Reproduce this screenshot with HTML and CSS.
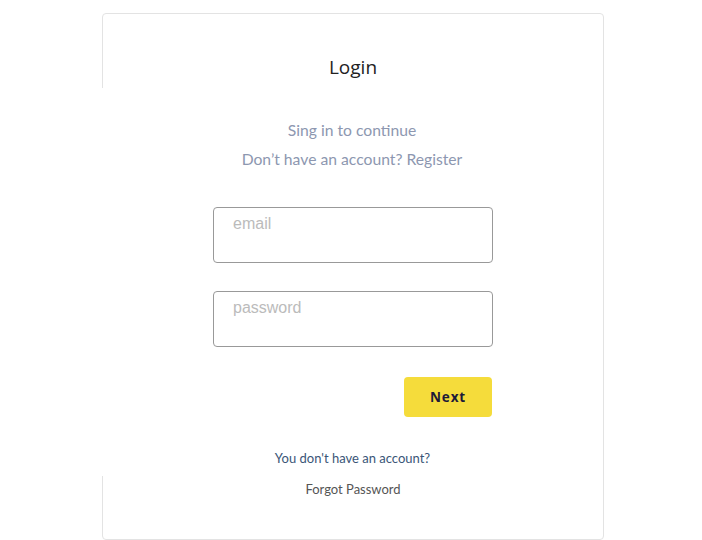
FILE: index.html
```html
<!DOCTYPE html>
<html>
<head>
<meta charset="utf-8">
<link rel="stylesheet" href="styles.css">
</head>
<body>
<div class="card">
  <h1 class="title">Login</h1>
  <p class="sub">Sing in to continue</p>
  <p class="sub sub2">Don’t have an account? Register</p>
  <form class="form">
    <input class="field" type="text" placeholder="email">
    <input class="field" type="password" placeholder="password">
    <div class="actions"><button type="button" class="next">Next</button></div>
  </form>
  <p class="link">You don't have an account?</p>
  <p class="forgot">Forgot Password</p>
</div>
</body>
</html>
```
FILE: styles.css
```css
html, body { margin: 0; padding: 0; background: #fff; }
body { padding-top: 13px; }
.card {
  position: relative;
  box-sizing: border-box;
  width: 502px;
  height: 527px;
  margin-left: 102px;
  border: 1px solid #e3e3e3;
  border-radius: 4px;
  display: flex;
  flex-direction: column;
  align-items: center;
  font-family: Lato, "Open Sans", sans-serif;
}
.card::before {
  content: "";
  position: absolute;
  left: -2px;
  top: 74px;
  width: 4px;
  height: 388px;
  background: #fff;
}
.title {
  margin: 41px 0 0;
  font-family: "Open Sans", sans-serif;
  font-weight: 400;
  font-size: 19px;
  line-height: 24px;
  color: #222;
}
.sub {
  margin: 41px 0 0;
  padding-right: 2px;
  font-size: 15.7px;
  line-height: 20px;
  color: #8d97b0;
}
.sub2 { margin-top: 9px; }
.form {
  margin-top: 38px;
  width: 280px;
  display: flex;
  flex-direction: column;
  gap: 28px;
}
.field {
  box-sizing: border-box;
  width: 280px;
  height: 56px;
  border: 1px solid #999;
  border-radius: 4px;
  padding: 0 19px 22px;
  font-family: "Liberation Sans", Arial, sans-serif;
  font-size: 16px;
  outline: none;
}
.field::placeholder { color: #bbb; }
.actions { display: flex; justify-content: flex-end; margin-top: 2px; }
.next {
  width: 88px;
  height: 40px;
  border: none;
  border-radius: 4px;
  background: #f5dc3b;
  font-family: "Open Sans", sans-serif;
  font-weight: 700;
  font-size: 13.5px;
  letter-spacing: 0.8px;
  color: #1d1a38;
  margin-right: 1px;
}
.link {
  margin: 32px 0 0;
  padding-right: 1px;
  font-size: 13px;
  line-height: 18px;
  color: #3a5577;
}
.forgot {
  margin: 13px 0 0;
  font-size: 13px;
  line-height: 18px;
  color: #555;
}
```
